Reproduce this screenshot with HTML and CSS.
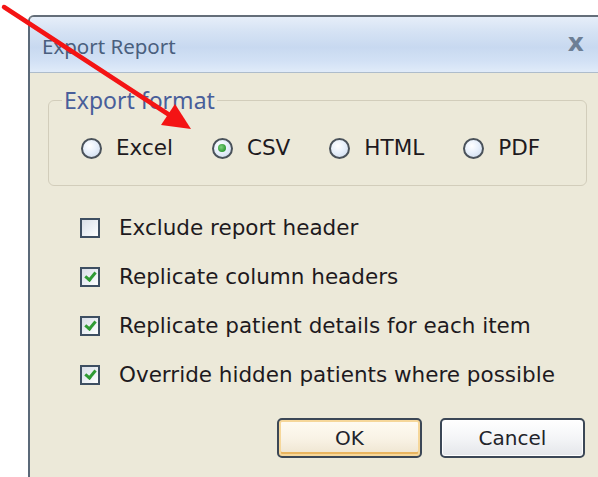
FILE: index.html
```html
<!DOCTYPE html>
<html lang="en">
<head>
<meta charset="utf-8">
<title>Export Report</title>
<link rel="stylesheet" href="styles.css">
</head>
<body>
<div class="dialog">
  <div class="titlebar">
    <span class="title">Export Report</span>
    <span class="close">x</span>
  </div>
  <div class="content">
    <fieldset class="group">
      <legend>Export format</legend>
      <div class="radios">
        <label class="opt"><span class="radio"></span>Excel</label>
        <label class="opt"><span class="radio on"></span>CSV</label>
        <label class="opt"><span class="radio"></span>HTML</label>
        <label class="opt"><span class="radio"></span>PDF</label>
      </div>
    </fieldset>
    <div class="checks">
      <label class="check"><span class="box"></span>Exclude report header</label>
      <label class="check"><span class="box on"></span>Replicate column headers</label>
      <label class="check"><span class="box on"></span>Replicate patient details for each item</label>
      <label class="check"><span class="box on"></span>Override hidden patients where possible</label>
    </div>
    <div class="buttons">
      <button class="btn default">OK</button>
      <button class="btn">Cancel</button>
    </div>
  </div>
</div>
<svg class="arrow" width="210" height="150" viewBox="0 0 210 150">
  <line x1="4" y1="7" x2="174" y2="118" stroke="#f41414" stroke-width="4.5" stroke-linecap="round"/>
  <polygon points="191,129 161,125 175,104" fill="#f41414"/>
</svg>
</body>
</html>
```
FILE: styles.css
```css
html, body {
  margin: 0;
  padding: 0;
  background: #ffffff;
  overflow: hidden;
}

body {
  width: 598px;
  height: 477px;
  position: relative;
  font-family: "DejaVu Sans", Verdana, sans-serif;
}

.dialog {
  margin: 15px 0 0 28px;
  width: 570px;
  height: 470px;
  border-left: 2px solid #5b6978;
  border-top: 2px solid #646e79;
  border-top-left-radius: 6px;
  background: #ece9d9;
}

.titlebar {
  height: 55px;
  display: flex;
  align-items: center;
  justify-content: space-between;
  padding: 0 16px 0 12px;
  border-bottom: 1px solid #aebccb;
  border-top-left-radius: 4px;
  background: linear-gradient(to bottom, #e6eef9 0%, #d6e3f4 25%, #c8d9f0 55%, #d2e1f5 80%, #e0ebf9 100%);
}

.title {
  font-family: "Noto Sans", "Open Sans", sans-serif;
  font-size: 20.5px;
  color: #4a5f7e;
  margin-top: 2px;
}

.close {
  font-family: "DejaVu Sans", sans-serif;
  font-weight: bold;
  font-size: 25px;
  color: #6d7f95;
  margin-top: -4px;
}

.content {
  padding: 14px 13px 0 18px;
}

.group {
  margin: 0;
  padding: 22px 0 24px 12px;
  border: 1px solid #d2cdbb;
  border-radius: 6px;
}

.group legend {
  font-family: "Noto Sans", "Open Sans", sans-serif;
  font-size: 23px;
  color: #485e9a;
  padding: 0 2px;
  margin-left: 1px;
  line-height: 26px;
}

.radios {
  display: flex;
  align-items: center;
  gap: 39px;
  margin-left: 20px;
}

.opt, .check {
  display: flex;
  align-items: center;
  font-size: 21.5px;
  color: #1e1a1e;
  line-height: 26px;
}

.radio {
  width: 17px;
  height: 17px;
  border-radius: 50%;
  border: 2px solid #4a525a;
  background: radial-gradient(circle at 40% 35%, #ffffff 0%, #e8f0fb 45%, #c9d7ea 100%);
  margin-right: 14px;
  position: relative;
  flex: none;
}

.radio.on::after {
  content: "";
  position: absolute;
  left: 4.5px;
  top: 4.5px;
  width: 8px;
  height: 8px;
  border-radius: 50%;
  background: radial-gradient(circle at 40% 40%, #7fd27f 0%, #2f9a35 70%);
}

.checks {
  display: flex;
  flex-direction: column;
  gap: 23px;
  margin: 29px 0 0 32px;
}

.box {
  width: 16px;
  height: 16px;
  border: 2px solid #3e4f62;
  background: linear-gradient(135deg, #d9dfe7 0%, #eef2f6 60%, #ffffff 100%);
  margin-right: 19px;
  position: relative;
  flex: none;
}

.box.on::after {
  content: "";
  position: absolute;
  left: 4.5px;
  top: 1px;
  width: 4px;
  height: 8px;
  border-right: 3px solid #2f9b33;
  border-bottom: 3px solid #2f9b33;
  transform: rotate(40deg);
}

.buttons {
  display: flex;
  justify-content: flex-end;
  gap: 18px;
  margin-top: 30px;
  padding-right: 2px;
}

.btn {
  width: 145px;
  height: 40px;
  border: 2px solid #3b4756;
  border-radius: 5px;
  font-family: "DejaVu Sans", Verdana, sans-serif;
  font-size: 20px;
  color: #22232a;
  background: linear-gradient(to bottom, #ffffff 0%, #f4f5f7 50%, #e4e6ea 100%);
  box-shadow: inset 0 0 0 1px #ffffff;
  padding: 0;
}

.btn.default {
  background: linear-gradient(to bottom, #fffbf2 0%, #f9f3e6 50%, #eee4cf 100%);
  box-shadow: inset 0 0 0 2px #f6d79a, inset 0 -2px 0 2px #e9b560;
}

.arrow {
  position: absolute;
  left: 0;
  top: 0;
}
```
